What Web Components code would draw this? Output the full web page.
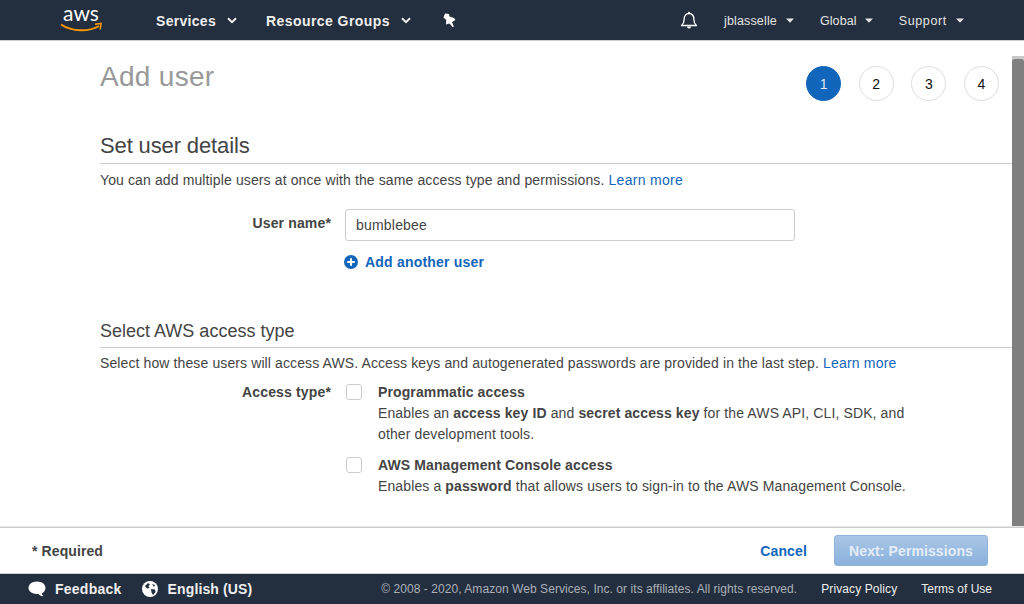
<!DOCTYPE html>
<html><head><meta charset="utf-8"><style>
html,body{margin:0;height:100%;overflow:hidden;background:#fff}
body{font-family:"Liberation Sans",Arial,sans-serif;font-size:14px;color:#444}
</style></head><body>
<aws-console></aws-console>
<script>
const def=(name,css,html)=>{customElements.define(name,class extends HTMLElement{constructor(){super();this.attachShadow({mode:'open'}).innerHTML=`<style>${css}</style>${html}`}})};
const caret=`<svg width="8" height="5" viewBox="0 0 8 5"><path d="M0 .5h8L4 4.800z" fill="#e6e6e6"/></svg>`;
const chev=`<svg width="10" height="7" viewBox="0 0 10 7"><path d="M1 1.200l4 4 4-4" fill="none" stroke="#eee" stroke-width="2"/></svg>`;

def('nav-item',`:host{display:flex;align-items:center;gap:9px;color:#e4e4e4;font-size:12.5px;letter-spacing:.2px;padding-top:1px}`,`<slot></slot>`);
def('top-bar',`:host{display:flex;align-items:center;height:40px;background:#232f3e;border-bottom:1px solid #ccc;box-sizing:content-box;flex:none}
.logo{width:42px;height:40px;margin-left:60px;display:flex;flex-direction:column;align-items:center;position:relative}
.logo span{font:400 21px/normal Lato,"Liberation Sans",sans-serif;color:#fff;letter-spacing:0}
.logo svg{position:absolute;left:0;top:22px}
.main{display:flex;align-items:center;margin-left:54px;color:#eee;font-weight:700;font-size:14px;letter-spacing:.3px;padding-top:1px}
.main div{display:flex;align-items:center;gap:11px}
.sp{flex:1}
.bell{margin-right:26px;margin-left:0}
nav-item{margin-right:26px}`,
`<div class="logo"><span>aws</span><svg width="42" height="12" viewBox="0 0 42 12"><path d="M1 2.500C12 10 29 10 39 4" fill="none" stroke="#f90" stroke-width="2"/><path d="M35 2.200l6-.7-.8 6" fill="none" stroke="#f90" stroke-width="1.600"/></svg></div>
<div class="main"><div>Services ${chev}</div><div style="margin-left:29px;letter-spacing:.43px">Resource Groups ${chev}</div></div>
<svg width="14" height="15" viewBox="0 0 14 15" style="margin-left:31px"><path d="M3 .5L7 1l.5 2.500L12 5l1.500 2L10 9l1.800 4.500-1 .7L7.500 10.500 4 11.500 4.300 7 1.500 4.500z" fill="#fff"/></svg>
<div class="sp"></div>
<svg class="bell" width="18" height="18" viewBox="0 0 18 18"><path d="M1.500 14.500c1.900-1.600 2.600-3 2.600-5.800C4.100 5 6 2.500 9 2.500s4.900 2.500 4.900 6.200c0 2.800.7 4.200 2.600 5.800z" fill="none" stroke="#fff" stroke-width="1.300" stroke-linejoin="round"/><path d="M7 15.500a2 2 0 0 0 4 0z" fill="#fff"/><circle cx="9" cy="1.800" r="1" fill="#fff"/></svg>
<nav-item style="letter-spacing:.15px">jblasselle ${caret}</nav-item><nav-item style="gap:8px;letter-spacing:.1px">Global ${caret}</nav-item><nav-item style="margin-right:60px;letter-spacing:.65px">Support ${caret}</nav-item>`);

def('step-dot',`:host{display:flex;width:35px;height:35px;box-sizing:border-box;border-radius:50%;border:1px solid #ddd;align-items:center;justify-content:center;font-size:14px;color:#111;background:#fff;letter-spacing:0;padding-top:1px}
:host([active]){background:#1166bb;border-color:#1166bb;color:#dfe9f5}`,`<slot></slot>`);
def('section-head',`:host{display:block;border-bottom:1px solid #ccc;color:#444}`,`<slot></slot>`);
def('form-row',`:host{display:grid;grid-template-columns:231px 1fr;column-gap:14px}
.l{font-weight:700;text-align:right;color:#444;letter-spacing:.15px}`,`<div class="l"><slot name="label"></slot></div><div><slot></slot></div>`);
def('check-opt',`:host{display:grid;grid-template-columns:16px 1fr;column-gap:16px;letter-spacing:.12px;line-height:21px;padding-left:1px}
.b{width:16px;height:16px;box-sizing:border-box;border:1px solid #ccc;border-radius:3px;background:#fff;margin-top:2px}`,`<div class="b"></div><div><slot></slot></div>`);
def('text-box',`:host{display:flex;align-items:center;width:450px;height:32px;box-sizing:border-box;border:1px solid #ccc;border-radius:3px;padding-left:10px;letter-spacing:.2px;color:#444}`,`<slot></slot>`);
def('action-bar',`:host{display:flex;align-items:center;height:45px;flex:none;background:#fff;border-top:1px solid #ccc;box-shadow:0 -1px 0 #e8e8e8;z-index:1;box-sizing:content-box;padding:0 36px 0 32px;letter-spacing:.1px}
.r{font-weight:700;color:#444;padding-top:1px}.sp{flex:1}
.c{font-weight:700;color:#1166bb;margin-right:27px;padding-top:1px;letter-spacing:.15px}
.n{width:154px;height:31px;box-sizing:border-box;border:1px solid #8fb4dc;border-radius:3px;background:linear-gradient(#a9c6e6,#8ab1dc);color:#e4edf7;font-weight:700;display:flex;align-items:center;justify-content:center;padding-top:1px}`,
`<div class="r">* Required</div><div class="sp"></div><div class="c">Cancel</div><div class="n">Next: Permissions</div>`);
def('foot-bar',`:host{display:flex;align-items:center;height:30px;flex:none;background:#232f3e;border-top:1px solid #ccc;color:#eee;font-size:12px}
.a{display:flex;align-items:center;font-weight:700;font-size:14px;letter-spacing:.25px}
.sp{flex:1}.cp{color:#aab0b8;letter-spacing:.06px}`,
`<div class="a" style="margin-left:28px"><svg width="18" height="18" viewBox="0 0 18 18" style="margin-right:9px"><path d="M9 1.500c5 0 8.500 2.800 8.500 6.400 0 2.600-1.600 4.500-3.800 5.500.3 1.200 1 2.100 1.800 2.900-2-.1-3.700-.9-5-2.300C5 14 .5 11.800.5 7.900.5 4.300 4 1.500 9 1.500z" fill="#fff"/></svg>Feedback</div>
<div class="a" style="margin-left:20px;letter-spacing:.12px"><svg width="16" height="16" viewBox="0 0 16 16" style="margin-right:10px"><circle cx="8" cy="8" r="8" fill="#fff"/><path d="M3 5l3-3 2 1.500L6.500 5l1 2-2.500.5zM9 8l4 .5.5 2.500-2.500 3-1.500-2.500zM10 3l3 1-1 2z" fill="#232f3e"/></svg>English (US)</div>
<div class="sp"></div><div class="cp">© 2008 - 2020, Amazon Web Services, Inc. or its affiliates. All rights reserved.</div><div style="margin-left:24px;letter-spacing:.1px">Privacy Policy</div><div style="margin:0 32px 0 24px">Terms of Use</div>`);
def('add-user-page',`:host{display:flex;flex:1;min-height:0;overflow:hidden}
.c{flex:1;min-width:0;padding-left:100px;letter-spacing:.12px}
.top{display:flex;justify-content:space-between;height:75px}
h1{font:400 28px/1 "Liberation Sans",sans-serif;color:#999;margin:22px 0 0;letter-spacing:.3px}
.steps{display:flex;gap:17.67px;margin:25px 13px 0 0}
section-head.a{font-size:22px;line-height:26px;padding-bottom:4px;margin-top:17px;letter-spacing:-.13px}
section-head.b{font-size:18px;line-height:22px;padding-bottom:5px;letter-spacing:0}
p{margin:0}a{color:#1166bb;letter-spacing:.3px}
.d{line-height:16px}
.add{display:flex;align-items:center;gap:7px;font-weight:700;color:#1166bb;margin:13px 0 0 -1px;line-height:16px;letter-spacing:.2px}
.sb{width:12px;background:#c8c8c8;margin-top:15px;flex:none;display:flex;justify-content:center;padding:3px 0 0;box-sizing:border-box}
.sb div{width:6px;background:#7f7f7f;border-radius:3px 3px 0 0;flex:1}`,
`<div class="c"><div class="top"><h1>Add user</h1><div class="steps"><step-dot active>1</step-dot><step-dot>2</step-dot><step-dot>3</step-dot><step-dot>4</step-dot></div></div>
<section-head class="a">Set user details</section-head>
<p class="d" style="margin-top:8px">You can add multiple users at once with the same access type and permissions. <a>Learn more</a></p>
<form-row style="margin-top:21px;height:76px"><span slot="label" style="line-height:28px">User name*</span><text-box>bumblebee</text-box><div class="add"><svg width="14" height="14" viewBox="0 0 14 14"><circle cx="7" cy="7" r="7" fill="#1166bb"/><path d="M7 3.200v7.600M3.200 7h7.600" stroke="#fff" stroke-width="2"/></svg>Add another user</div></form-row>
<section-head class="b" style="margin-top:35px">Select AWS access type</section-head>
<p class="d" style="margin-top:7px;letter-spacing:.11px">Select how these users will access AWS. Access keys and autogenerated passwords are provided in the last step. <a style="letter-spacing:.2px">Learn more</a></p>
<form-row style="margin-top:11px"><span slot="label" style="line-height:21px">Access type*</span>
<check-opt><b>Programmatic access</b><br>Enables an <b>access key ID</b> and <b>secret access key</b> for the AWS API, CLI, SDK, and<br>other development tools.</check-opt>
<check-opt style="margin-top:10px"><b>AWS Management Console access</b><br>Enables a <b>password</b> that allows users to sign-in to the AWS Management Console.</check-opt></form-row>
</div><div class="sb"><div></div></div>`);
def('aws-console',`:host{display:flex;flex-direction:column;height:100vh}`,`<top-bar></top-bar><add-user-page></add-user-page><action-bar></action-bar><foot-bar></foot-bar>`);
</script></body></html>
